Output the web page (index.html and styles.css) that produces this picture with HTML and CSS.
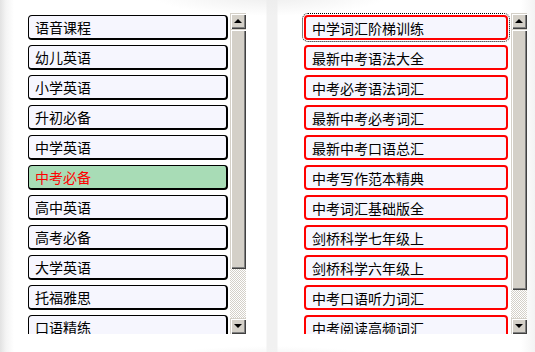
FILE: index.html
```html
<!DOCTYPE html>
<html lang="zh-CN">
<head>
  <meta charset="UTF-8" />
  <title>课程选择</title>
  <link rel="stylesheet" href="styles.css">
</head>
<body>
  <div class="page">
    <!-- Course categories -->
    <div class="listbox listbox-left">
      <ul class="items">
        <li class="item">语音课程</li>
        <li class="item">幼儿英语</li>
        <li class="item">小学英语</li>
        <li class="item">升初必备</li>
        <li class="item">中学英语</li>
        <li class="item selected">中考必备</li>
        <li class="item">高中英语</li>
        <li class="item">高考必备</li>
        <li class="item">大学英语</li>
        <li class="item">托福雅思</li>
        <li class="item">口语精练</li>
      </ul>
      <div class="scrollbar">
        <div class="sb-btn up"></div>
        <div class="sb-thumb" style="height: 240px"></div>
        <div class="sb-track"></div>
        <div class="sb-btn down"></div>
      </div>
    </div>

    <!-- Books in category -->
    <div class="listbox listbox-right">
      <ul class="items">
        <li class="item focused">中学词汇阶梯训练</li>
        <li class="item">最新中考语法大全</li>
        <li class="item">中考必考语法词汇</li>
        <li class="item">最新中考必考词汇</li>
        <li class="item">最新中考口语总汇</li>
        <li class="item">中考写作范本精典</li>
        <li class="item">中考词汇基础版全</li>
        <li class="item">剑桥科学七年级上</li>
        <li class="item">剑桥科学六年级上</li>
        <li class="item">中考口语听力词汇</li>
        <li class="item">中考阅读高频词汇</li>
      </ul>
      <div class="scrollbar">
        <div class="sb-btn up"></div>
        <div class="sb-thumb" style="height: 261px"></div>
        <div class="sb-track"></div>
        <div class="sb-btn down"></div>
      </div>
    </div>
  </div>
</body>
</html>
```

FILE: styles.css
```css
* {
  box-sizing: border-box;
  margin: 0;
  padding: 0;
}

body {
  width: 535px;
  height: 352px;
  overflow: hidden;
  font-family: "Noto Sans CJK SC", "Noto Sans", sans-serif;
  font-size: 14px;
  color: #000;
  background:
    radial-gradient(ellipse 190px 38px at 270px 384px, #e4e4e4 0, #f2f2f2 70%, rgba(255,255,255,0) 100%),
    radial-gradient(ellipse 120px 22px at 270px -6px, #ececec 0, rgba(255,255,255,0) 100%),
    linear-gradient(to right, rgba(255,255,255,0) 266px, #f1f1f1 267px, #f1f1f1 277px, rgba(255,255,255,0) 278px),
    linear-gradient(to right, #e2e2e2 0, #f4f4f4 6px, #fff 14px, #fff 521px, #f3f3f3 535px);
}

.page {
  display: flex;
  padding-top: 13px;
}

/* List boxes */
.listbox {
  display: flex;
  height: 321px;
}

.listbox-left {
  margin-left: 25px;
}

.listbox-right {
  margin-left: 55px;
}

.items {
  list-style: none;
  overflow: hidden;
  padding: 2px 3px 0;
}

.listbox-left .items {
  width: 205px;
}

.listbox-right .items {
  width: 210px;
}

.item {
  height: 25px;
  margin-bottom: 5px;
  padding-left: 6px;
  display: flex;
  align-items: center;
  background-color: #f6f6fe;
  border: 1px solid #000;
  border-right-width: 2px;
  border-bottom-width: 2px;
  border-radius: 4px;
  white-space: nowrap;
}

.listbox-left .item {
  width: 200px;
}

.listbox-right .item {
  width: 204px;
  border-color: #ff0000;
  border-width: 2px;
}

.item.selected {
  background-color: #a8dcb6;
  color: #ff0000;
}

.item.focused {
  outline: 1px dotted #000;
  outline-offset: 1px;
}

/* Classic scrollbar */
.scrollbar {
  width: 16px;
  display: flex;
  flex-direction: column;
}

.sb-btn,
.sb-thumb {
  background-color: #d4d0c8;
  box-shadow: inset 1px 1px 0 #d4d0c8, inset 2px 2px 0 #fff, inset -1px -1px 0 #404040, inset -2px -2px 0 #808080;
}

.sb-btn {
  height: 16px;
  display: flex;
  align-items: center;
  justify-content: center;
}

.sb-btn::after {
  content: "";
  border-left: 4px solid transparent;
  border-right: 4px solid transparent;
}

.sb-btn.up::after {
  border-bottom: 4px solid #000;
}

.sb-btn.down::after {
  border-top: 4px solid #000;
}

.sb-track {
  flex-grow: 1;
  background-color: #fff;
  background-image: conic-gradient(#d4d0c8 25%, #fff 0 50%, #d4d0c8 0 75%, #fff 0);
  background-size: 2px 2px;
}
```
